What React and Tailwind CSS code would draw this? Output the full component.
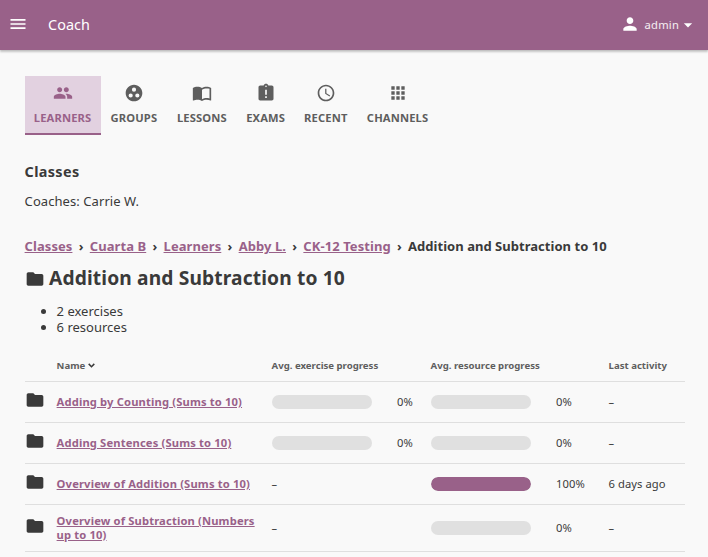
import {
  MdMenu, MdPerson, MdArrowDropDown, MdPeople, MdGroupWork, MdImportContacts,
  MdAssignmentLate, MdSchedule, MdApps, MdFolder,
} from 'react-icons/md';

const tabs = [
  { label: 'LEARNERS', icon: MdPeople, width: 'w-[76px]', active: true },
  { label: 'GROUPS', icon: MdGroupWork, width: 'w-[66.5px]' },
  { label: 'LESSONS', icon: MdImportContacts, width: 'w-[69.5px]', halfFilled: true },
  { label: 'EXAMS', icon: MdAssignmentLate, width: 'w-[58px]' },
  { label: 'RECENT', icon: MdSchedule, width: 'w-[62.5px]' },
  { label: 'CHANNELS', icon: MdApps, width: 'w-[81px]' },
];

const crumbs = ['Classes', 'Cuarta B', 'Learners', 'Abby L.', 'CK-12 Testing'];

const rows = [
  { name: 'Adding by Counting (Sums to 10)', exercise: 0, resource: 0, last: '–' },
  { name: 'Adding Sentences (Sums to 10)', exercise: 0, resource: 0, last: '–' },
  { name: 'Overview of Addition (Sums to 10)', exercise: null, resource: 100, last: '6 days ago' },
  { name: 'Overview of Subtraction (Numbers up to 10)', exercise: null, resource: 0, last: '–', tall: true },
];

const columns = 'grid grid-cols-[32px_215px_159px_178px_1fr]';

function Progress({ value }) {
  if (value === null) return <span>–</span>;
  return (
    <div className="flex items-center">
      <div className="h-[14px] w-[100px] overflow-hidden rounded-full bg-[#e0e0e0]">
        <div className="h-full rounded-full bg-[#996189]" style={{ width: `${value}%` }} />
      </div>
      <span className="ml-[25.4px] tracking-[0.1px]">{value}%</span>
    </div>
  );
}

export default function App() {
  return (
    <div className="h-[557px] overflow-hidden bg-[#f9f9f9] font-['Noto_Sans',sans-serif] text-[13px] text-[#3a3a3a]">
      <header className="flex h-[50px] items-center bg-[#996189] pb-[2px] pl-2 pr-[10px] text-white shadow-[0_0_2px_rgba(0,0,0,0.12),0_2px_2px_rgba(0,0,0,0.2)]">
        <MdMenu className="size-5" />
        <h1 className="ml-5 mt-px text-[14.4px] leading-5 tracking-[0.05px]">Coach</h1>
        <div className="ml-auto flex items-center">
          <MdPerson className="mb-px size-5" />
          <span className="ml-[5px] mt-[2px] text-[11.2px] tracking-[0.2px] text-white/90">admin</span>
          <MdArrowDropDown className="-ml-px mt-px size-5" />
        </div>
      </header>

      <main className="pl-[24.6px] pr-[23px] pt-[26px]">
        <nav className="flex h-[59px]">
          {tabs.map(({ label, icon: Icon, width, active }) => (
            <a
              key={label}
              className={`flex flex-col items-center border-b-2 pt-[7px] ${width} ${
                active ? 'border-[#996189] bg-[#e2d1e0] text-[#996189]' : 'border-transparent text-[#5e5e5e]'
              }`}
            >
              <Icon className="size-5" />
              <span className="mt-[7px] text-[11.2px] font-bold leading-4 tracking-[0.14px]">{label}</span>
            </a>
          ))}
        </nav>

        <h2 className="mt-[27px] text-[14.4px] font-bold leading-5 tracking-[0.35px]">Classes</h2>
        <p className="mt-[10px] leading-[18px] tracking-[0.07px]">Coaches: Carrie W.</p>

        <div className="mt-[28px] flex whitespace-nowrap font-bold leading-[17px]">
          {crumbs.map((c) => (
            <span key={c} className="flex">
              <a className="tracking-[0.07px] text-[#996189] underline">{c}</a>
              <span className="mx-[6.3px]">›</span>
            </span>
          ))}
          <span className="tracking-[0.03px]">Addition and Subtraction to 10</span>
        </div>

        <div className="mt-[11px] flex h-6 items-center">
          <MdFolder className="mt-[2px] size-5" />
          <h3 className="ml-[4.4px] text-[19.2px] font-bold leading-6 tracking-[0.14px]">Addition and Subtraction to 10</h3>
        </div>

        <ul className="mt-[13px] list-disc pl-8 leading-4">
          <li>2 exercises</li>
          <li>6 resources</li>
        </ul>

        <section className="mt-[16px] text-[11.2px]">
          <div className={`${columns} h-[31px] items-center border-b border-[#dfdfdf] text-[9.6px] font-bold text-[#5e5e5e]`}>
            <span />
            <span className="flex items-center gap-[3px]">
              Name
              <svg className="h-[5px] w-[7px] text-[#3a3a3a]" viewBox="0 0 7 5" fill="none" stroke="currentColor" strokeWidth="1.5">
                <path d="M.7.9 3.5 3.7 6.3.9" />
              </svg>
            </span>
            <span>Avg. exercise progress</span>
            <span>Avg. resource progress</span>
            <span>Last activity</span>
          </div>
          {rows.map((r) => (
            <div
              key={r.name}
              className={`${columns} items-center border-b border-[#dfdfdf] leading-[14px] ${r.tall ? 'h-[47px]' : 'h-[41px]'}`}
            >
              <MdFolder className="mb-1 size-5" />
              <a className="pr-3 font-bold tracking-[0.15px] text-[#996189] underline">{r.name}</a>
              <Progress value={r.exercise} />
              <Progress value={r.resource} />
              <span className="tracking-[0.05px]">{r.last}</span>
            </div>
          ))}
        </section>
      </main>
    </div>
  );
}
